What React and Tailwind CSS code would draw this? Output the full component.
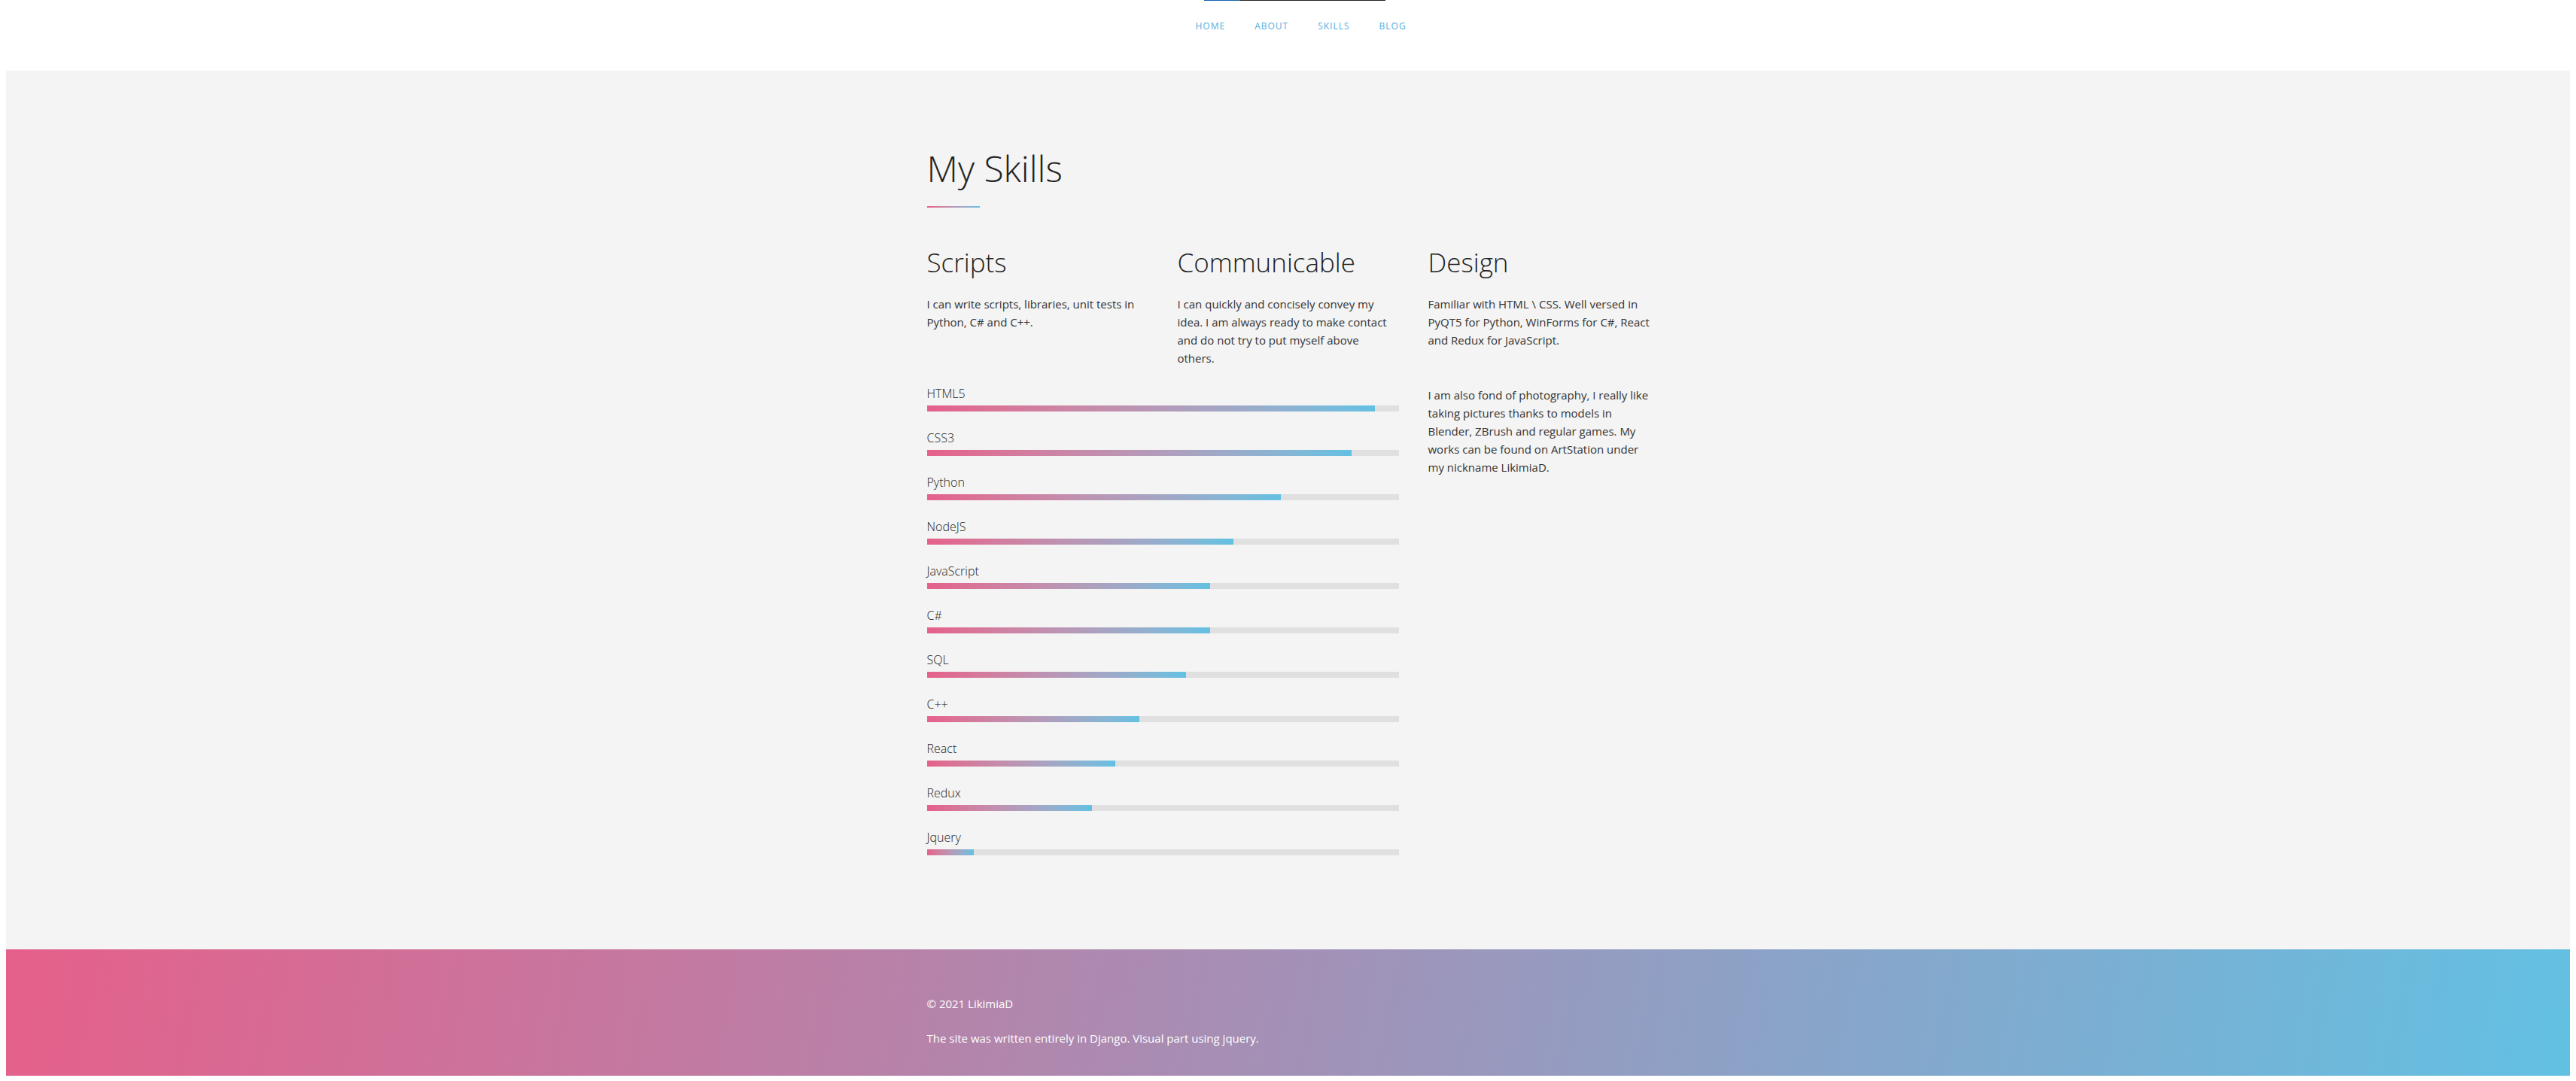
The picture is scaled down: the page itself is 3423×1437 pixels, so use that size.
import React from 'react';

const skills = [
  { name: 'HTML5', level: 95 },
  { name: 'CSS3', level: 90 },
  { name: 'Python', level: 75 },
  { name: 'NodeJS', level: 65 },
  { name: 'JavaScript', level: 60 },
  { name: 'C#', level: 60 },
  { name: 'SQL', level: 55 },
  { name: 'C++', level: 45 },
  { name: 'React', level: 40 },
  { name: 'Redux', level: 35 },
  { name: 'Jquery', level: 10 },
];

const links = ['HOME', 'ABOUT', 'SKILLS', 'BLOG'];

const SkillBar = ({ name, level }) => (
  <div className="mt-[25px] first:mt-0">
    <div className="text-[16px] leading-[20px] font-light text-[#222]">{name}</div>
    <div className="mt-[6px] h-[8px] w-full bg-[#e0e0e0]">
      <div
        className="h-full bg-linear-to-r from-[#e5608a] to-[#62c1e3]"
        style={{ width: `${level}%` }}
      />
    </div>
  </div>
);

const App = () => {
  return (
    <div className="min-h-screen bg-white font-['Open_Sans',sans-serif] pb-[5px]">
      {/* header */}
      <header className="h-[94px]">
        <div className="flex h-px">
          <div className="ml-[1600px] w-[48px] bg-[#0f62ac]" />
          <div className="w-[193px] bg-[#222]" />
        </div>
        <nav className="w-[960px] mx-auto pl-[357px] pt-[26px] flex gap-[39px]">
          {links.map((l) => (
            <a key={l} href="#" className="text-[12px] leading-[16px] tracking-[1px] text-[#52aedd]">
              {l}
            </a>
          ))}
        </nav>
      </header>

      {/* skills */}
      <section className="mx-2 bg-[#f4f4f4] pt-[106px] pb-[125px]">
        <div className="w-[960px] mx-auto text-[#333]">
          <h1 className="text-[48px] leading-none font-light text-[#222]">My Skills</h1>
          <div className="mt-[26px] h-[2px] w-[70px] bg-linear-to-r from-[#e5608a] to-[#62c1e3]" />

          <div className="mt-[55px] flex gap-[39px]">
            <div className="w-[627px] shrink-0">
              <div className="flex gap-[39px]">
                <div className="w-[294px]">
                  <h3 className="text-[35px] leading-none font-light text-[#222]">Scripts</h3>
                  <p className="mt-[26px] text-[15px] leading-[24px]">
                    I can write scripts, libraries, unit tests in Python, C# and C++.
                  </p>
                </div>
                <div className="w-[294px]">
                  <h3 className="text-[35px] leading-none font-light text-[#222]">Communicable</h3>
                  <p className="mt-[26px] text-[15px] leading-[24px]">
                    I can quickly and concisely convey my idea. I am always ready to make contact and do not try to put myself above others.
                  </p>
                </div>
              </div>

              <div className="mt-[25px]">
                {skills.map((s) => (
                  <SkillBar key={s.name} {...s} />
                ))}
              </div>
            </div>

            <div className="w-[310px] shrink-0">
              <h3 className="text-[35px] leading-none font-light text-[#222]">Design</h3>
              <p className="mt-[26px] text-[15px] leading-[24px]">
                Familiar with HTML \ CSS. Well versed in PyQT5 for Python, WinForms for C#, React and Redux for JavaScript.
              </p>
              <p className="mt-[49px] w-[294px] text-[15px] leading-[24px]">
                I am also fond of photography, I really like taking pictures thanks to models in Blender, ZBrush and regular games. My works can be found on ArtStation under my nickname LikimiaD.
              </p>
            </div>
          </div>
        </div>
      </section>

      {/* footer */}
      <footer className="mx-2 h-[168px] bg-[linear-gradient(100deg,#e5608a,#62c1e3)] pt-[60px]">
        <div className="w-[960px] mx-auto text-white text-[15px] leading-[24px]">
          <p>© 2021 LikimiaD</p>
          <p className="mt-[22px]">The site was written entirely in Django. Visual part using jquery.</p>
        </div>
      </footer>
    </div>
  );
};

export default App;
